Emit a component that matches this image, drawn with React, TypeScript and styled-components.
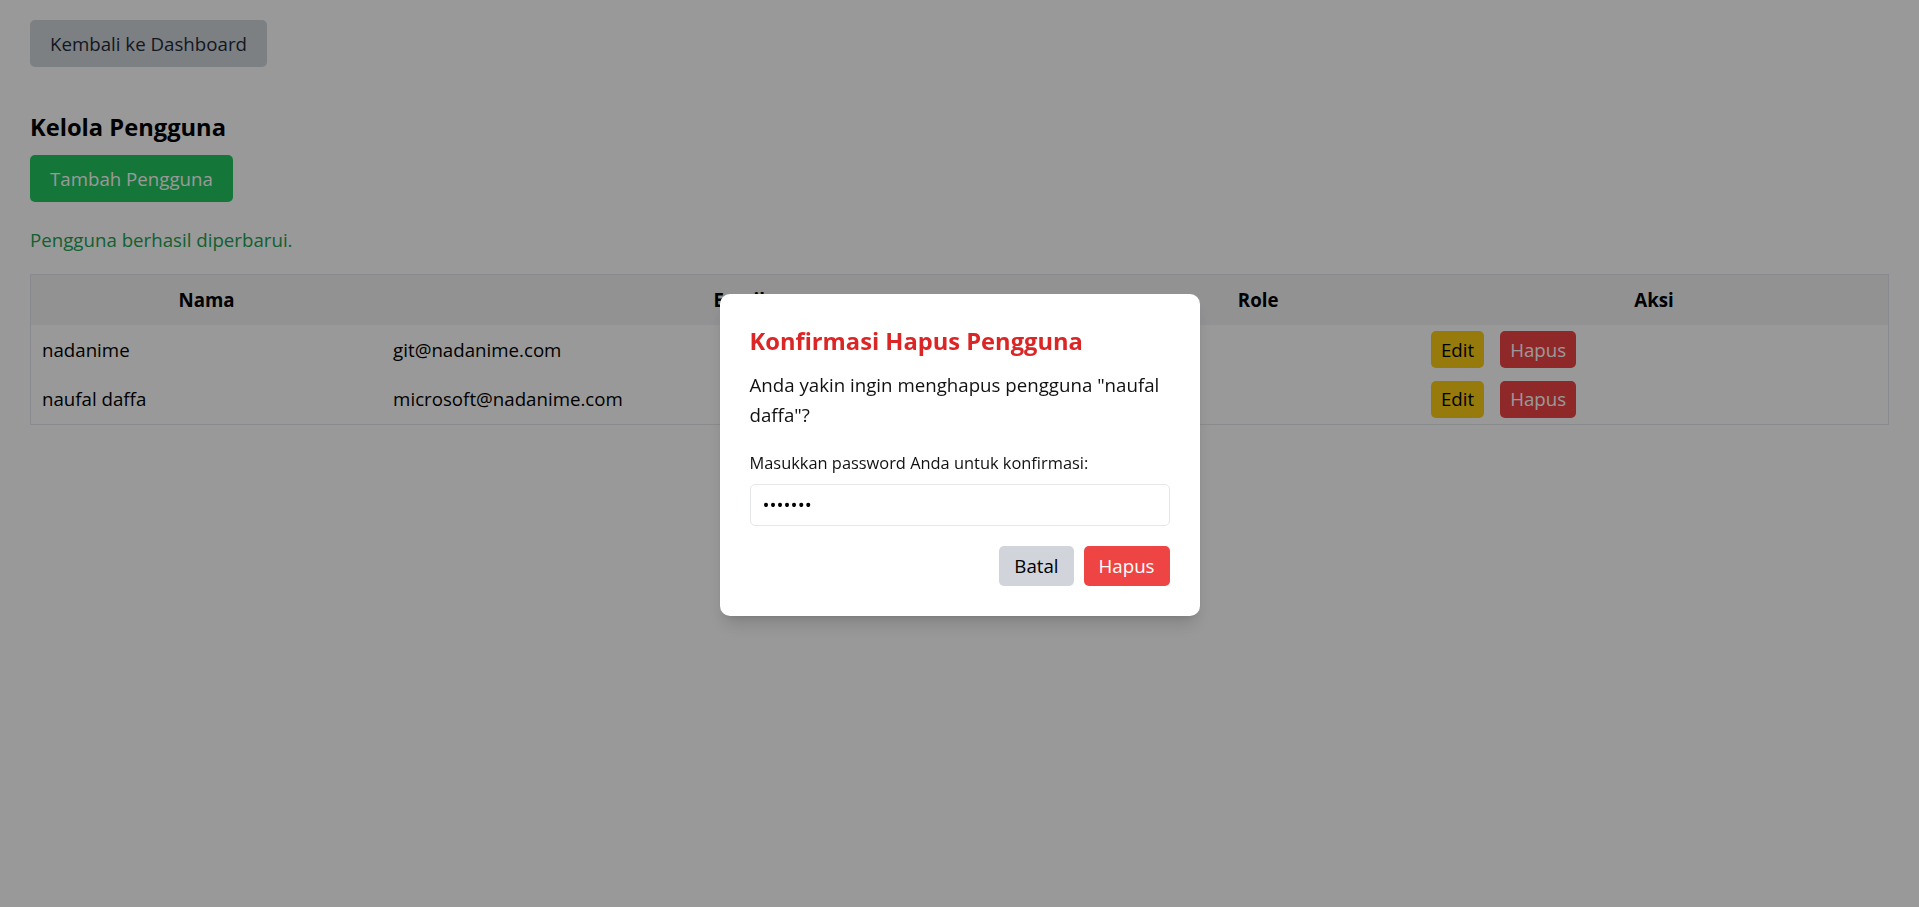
import styled, { createGlobalStyle } from "styled-components"

const GlobalStyle = createGlobalStyle`
  * {
    box-sizing: border-box;
  }
  body {
    margin: 0;
    background: #ffffff;
    font-family: "Open Sans", "Noto Sans", sans-serif;
    font-size: 18.7px;
    line-height: 30px;
    color: #000;
  }
`

const Page = styled.div`
  padding: 20px 30px 30px;
`

const Button = styled.button<{ $bg: string; $color: string; $h?: number; $px?: number }>`
  display: inline-flex;
  align-items: center;
  justify-content: center;
  height: ${({ $h }) => $h ?? 47}px;
  padding: 0 ${({ $px }) => $px ?? 20}px;
  border: 0;
  border-radius: 5px;
  background: ${({ $bg }) => $bg};
  color: ${({ $color }) => $color};
  font-family: inherit;
  font-size: 18.7px;
  line-height: 30px;
  cursor: pointer;
`

const Title = styled.h2`
  margin: 43px 0 10px;
  font-size: 23.7px;
  line-height: 35px;
  font-weight: 700;
`

const Success = styled.p`
  margin: 23px 0 19px;
  color: #22a052;
`

const Table = styled.table`
  width: 100%;
  border-collapse: collapse;
  border: 1px solid #e5e7eb;
`

const HeadRow = styled.tr`
  background: #f3f4f6;
`

const Th = styled.th`
  height: 50px;
  padding: 0 11px;
  font-weight: 700;
  text-align: center;
`

const Td = styled.td`
  height: 50px;
  padding: 6px 11px;
  text-align: left;
  vertical-align: middle;
`

const Actions = styled.div`
  display: flex;
  gap: 16px;
`

const Overlay = styled.div`
  position: fixed;
  inset: 0;
  background: rgba(0, 0, 0, 0.4);
  display: flex;
  align-items: center;
  justify-content: center;
`

const Modal = styled.div`
  width: 480px;
  margin-top: 2px;
  padding: 30px;
  background: #fff;
  border-radius: 10px;
  box-shadow: 0 12px 18px -4px rgba(0, 0, 0, 0.15), 0 5px 8px -5px rgba(0, 0, 0, 0.12);
`

const ModalTitle = styled.h3`
  margin: 0 0 11px;
  color: #dc2626;
  font-size: 23.7px;
  line-height: 35px;
  font-weight: 700;
`

const ModalText = styled.p`
  margin: 0 0 20px;
  color: #111;
`

const Label = styled.label`
  display: block;
  margin-bottom: 9px;
  font-size: 16.4px;
  line-height: 25px;
  color: #111;
`

const Input = styled.input`
  display: block;
  width: 100%;
  height: 42px;
  padding: 0 12px;
  border: 1px solid #e5e7eb;
  border-radius: 5px;
  font-family: inherit;
  font-size: 18.7px;
  color: #000;
  outline: none;
`

const ModalActions = styled.div`
  display: flex;
  justify-content: flex-end;
  gap: 10px;
  margin-top: 20px;
`

const users = [
  { name: "nadanime", email: "git@nadanime.com", role: "admin" },
  { name: "naufal daffa", email: "microsoft@nadanime.com", role: "user" },
]

export default function App() {
  return (
    <>
      <GlobalStyle />
      <Page>
        <Button $bg="#d1d5db" $color="#1f2937">Kembali ke Dashboard</Button>
        <Title>Kelola Pengguna</Title>
        <Button $bg="#22c55e" $color="#fff">Tambah Pengguna</Button>
        <Success>Pengguna berhasil diperbarui.</Success>
        <Table>
          <colgroup>
            <col style={{ width: 352 }} />
            <col style={{ width: 715 }} />
            <col style={{ width: 324 }} />
            <col style={{ width: 469 }} />
          </colgroup>
          <thead>
            <HeadRow>
              <Th>Nama</Th>
              <Th>Email</Th>
              <Th>Role</Th>
              <Th>Aksi</Th>
            </HeadRow>
          </thead>
          <tbody>
            {users.map((u) => (
              <tr key={u.email}>
                <Td>{u.name}</Td>
                <Td>{u.email}</Td>
                <Td>{u.role}</Td>
                <Td>
                  <Actions>
                    <Button $bg="#facc15" $color="#000" $h={37} $px={10}>Edit</Button>
                    <Button $bg="#ef4444" $color="#fff" $h={37} $px={10}>Hapus</Button>
                  </Actions>
                </Td>
              </tr>
            ))}
          </tbody>
        </Table>
      </Page>
      <Overlay>
        <Modal>
          <ModalTitle>Konfirmasi Hapus Pengguna</ModalTitle>
          <ModalText>Anda yakin ingin menghapus pengguna "naufal daffa"?</ModalText>
          <Label htmlFor="pw">Masukkan password Anda untuk konfirmasi:</Label>
          <Input id="pw" type="password" defaultValue="1234567" />
          <ModalActions>
            <Button $bg="#d1d5db" $color="#000" $h={40} $px={15}>Batal</Button>
            <Button $bg="#ef4444" $color="#fff" $h={40} $px={15}>Hapus</Button>
          </ModalActions>
        </Modal>
      </Overlay>
    </>
  )
}
